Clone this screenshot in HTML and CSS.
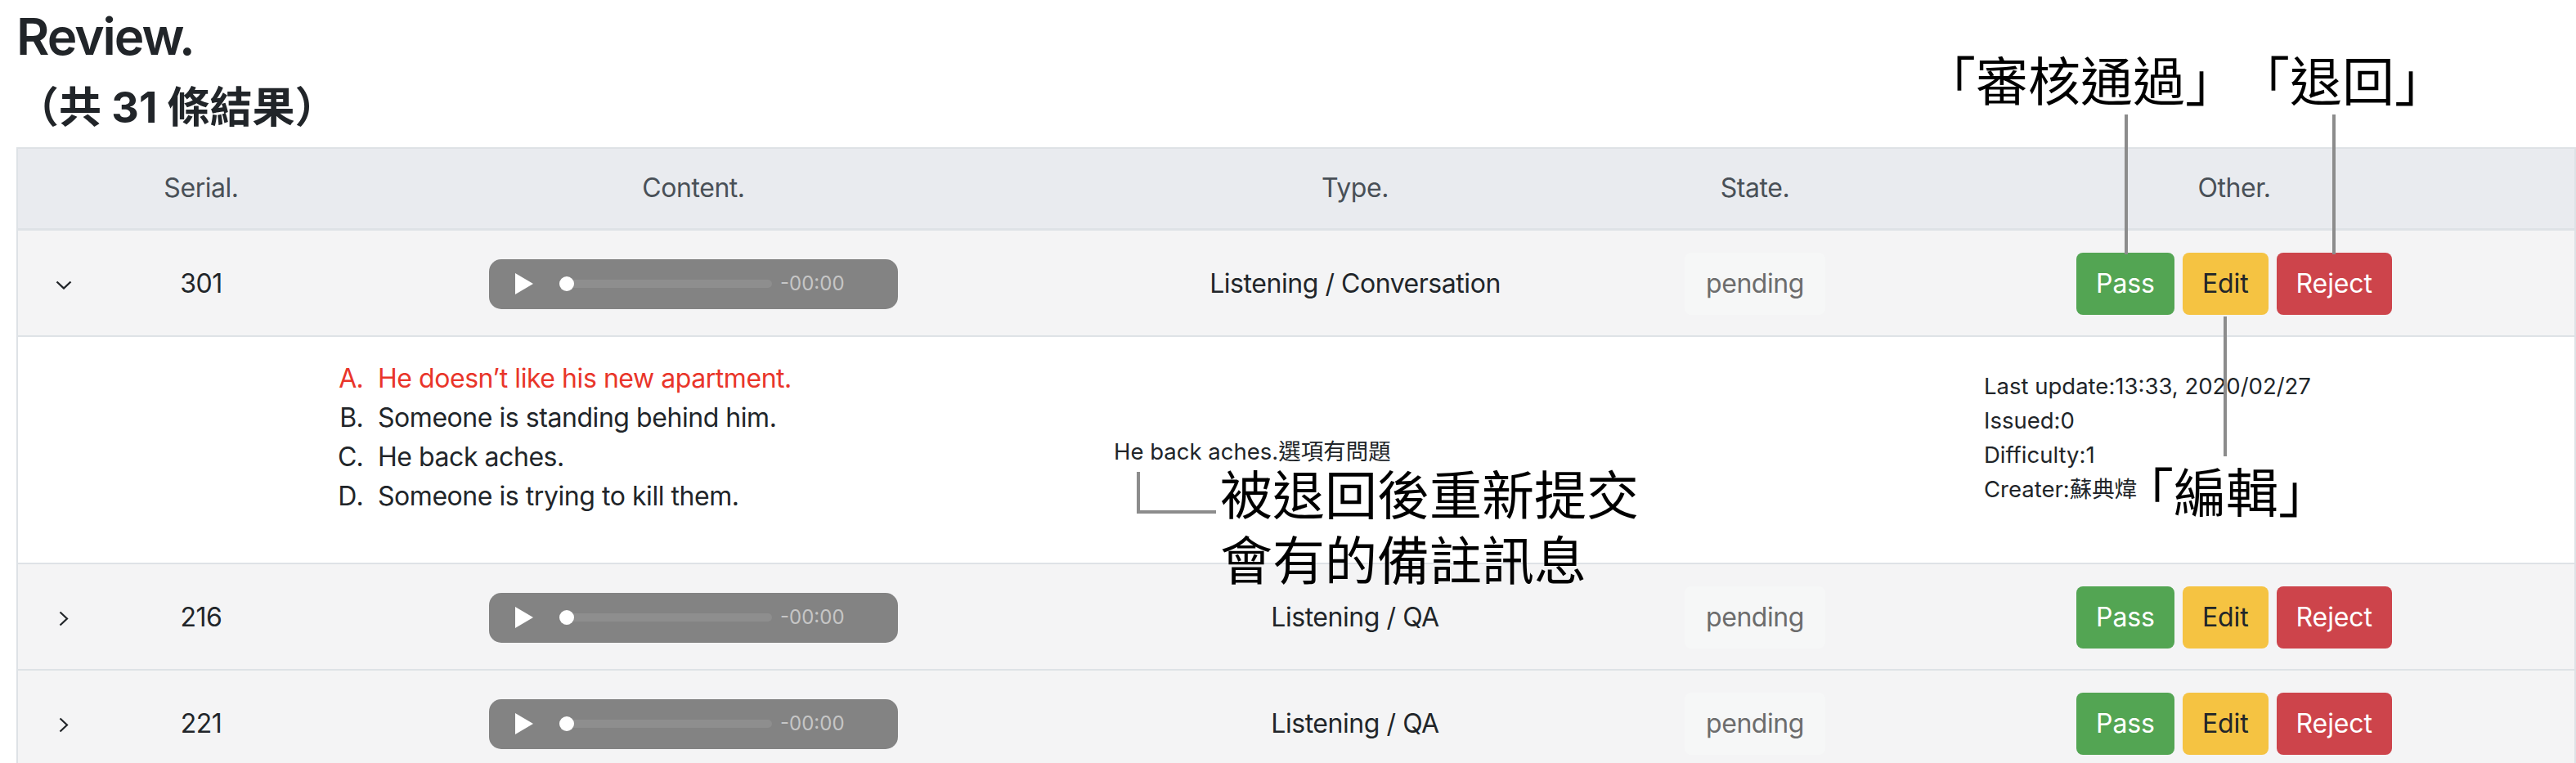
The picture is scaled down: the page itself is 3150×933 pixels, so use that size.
FILE: index.html
```html
<!DOCTYPE html>
<html lang="zh-Hant">
<head>
<meta charset="utf-8">
<title>Review.</title>
<link rel="stylesheet" href="styles.css">
</head>
<body>
<div class="page">
  <header class="page-head">
    <h2 class="title">Review.</h2>
    <h3 class="count">（共 31 條結果）</h3>
  </header>

  <table class="review">
    <colgroup>
      <col class="c-toggle"><col class="c-serial"><col class="c-content"><col class="c-type"><col class="c-state"><col class="c-other">
    </colgroup>
    <thead>
      <tr><th></th><th>Serial.</th><th>Content.</th><th>Type.</th><th>State.</th><th>Other.</th></tr>
    </thead>
    <tbody>
      <tr class="row">
        <td><svg class="chev-down" width="20" height="11" viewBox="0 0 20 11"><polyline points="1.5,1.5 10,9.5 18.5,1.5" fill="none" stroke="#212529" stroke-width="2.4"/></svg></td>
        <td>301</td>
        <td>
          <div class="player">
            <svg class="play" width="22" height="26" viewBox="0 0 22 26"><polygon points="0,0 22,13 0,26" fill="#fff"/></svg>
            <div class="track"><span class="knob"></span></div>
            <span class="time">-00:00</span>
          </div>
        </td>
        <td>Listening / Conversation</td>
        <td><span class="badge">pending</span></td>
        <td><div class="actions"><span class="btn pass">Pass</span><span class="btn edit">Edit</span><span class="btn reject">Reject</span></div></td>
      </tr>
      <tr class="detail">
        <td></td>
        <td></td>
        <td>
          <ol class="options">
            <li class="correct">He doesn’t like his new apartment.</li>
            <li>Someone is standing behind him.</li>
            <li>He back aches.</li>
            <li>Someone is trying to kill them.</li>
          </ol>
        </td>
        <td><span class="note">He back aches.選項有問題</span></td>
        <td></td>
        <td class="info-cell">
          <div class="info">
            <div>Last update:13:33, 2020/02/27</div>
            <div>Issued:0</div>
            <div>Difficulty:1</div>
            <div>Creater:蘇典煒</div>
          </div>
        </td>
      </tr>
      <tr class="row">
        <td><svg class="chev-right" width="12" height="19" viewBox="0 0 12 19"><polyline points="1.5,1.5 10,9.5 1.5,17.5" fill="none" stroke="#212529" stroke-width="2.2"/></svg></td>
        <td>216</td>
        <td>
          <div class="player">
            <svg class="play" width="22" height="26" viewBox="0 0 22 26"><polygon points="0,0 22,13 0,26" fill="#fff"/></svg>
            <div class="track"><span class="knob"></span></div>
            <span class="time">-00:00</span>
          </div>
        </td>
        <td>Listening / QA</td>
        <td><span class="badge">pending</span></td>
        <td><div class="actions"><span class="btn pass">Pass</span><span class="btn edit">Edit</span><span class="btn reject">Reject</span></div></td>
      </tr>
      <tr class="row">
        <td><svg class="chev-right" width="12" height="19" viewBox="0 0 12 19"><polyline points="1.5,1.5 10,9.5 1.5,17.5" fill="none" stroke="#212529" stroke-width="2.2"/></svg></td>
        <td>221</td>
        <td>
          <div class="player">
            <svg class="play" width="22" height="26" viewBox="0 0 22 26"><polygon points="0,0 22,13 0,26" fill="#fff"/></svg>
            <div class="track"><span class="knob"></span></div>
            <span class="time">-00:00</span>
          </div>
        </td>
        <td>Listening / QA</td>
        <td><span class="badge">pending</span></td>
        <td><div class="actions"><span class="btn pass">Pass</span><span class="btn edit">Edit</span><span class="btn reject">Reject</span></div></td>
      </tr>
    </tbody>
  </table>

  <!-- annotation overlays -->
  <div class="ann ann-top">「審核通過」「退回」</div>
  <div class="ann-line line-pass"></div>
  <div class="ann-line line-reject"></div>
  <div class="ann-line line-edit"></div>
  <div class="ann ann-edit">「編輯」</div>
  <div class="ann-elbow"></div>
  <div class="ann ann-note">被退回後重新提交<br>會有的備註訊息</div>
</div>
</body>
</html>
```

FILE: styles.css
```css
* { box-sizing: border-box; }

html, body {
  margin: 0;
  padding: 0;
  background: #fff;
}

body {
  font-family: Inter, "Noto Sans CJK TC", sans-serif;
  color: #212529;
  font-size: 32px;
  line-height: 48px;
}

.page {
  position: relative;
  padding: 0 2px 0 20px;
  overflow: hidden;
  height: 933px;
}

.page-head {
  height: 180px;
}

.title {
  margin: 0;
  padding-top: 7px;
  font-size: 62px;
  line-height: 76px;
  font-weight: 600;
  letter-spacing: -2px;
}

.count {
  margin: 0;
  padding-top: 17px;
  font-size: 52px;
  line-height: 64px;
  font-weight: 700;
}

/* table */
.review {
  width: 3128px;
  table-layout: fixed;
  border-collapse: separate;
  border-spacing: 0;
  border: 2px solid #dee2e6;
  border-bottom: 0;
  letter-spacing: -0.45px;
}

.c-toggle { width: 112px; }
.c-serial { width: 224px; }
.c-content { width: 980px; }
.c-type { width: 638px; }
.c-state { width: 340px; }
.c-other { width: 832px; }

.review th {
  background: #e9ebef;
  color: #495057;
  font-weight: 400;
  font-size: 32px;
  line-height: 51px;
  padding: 22px 24px 24px;
  text-align: center;
  border-bottom: 3px solid #dee2e6;
}

.review td {
  padding: 27px 24px 25px;
  border-top: 2px solid #dee2e6;
  vertical-align: middle;
  text-align: center;
  line-height: 48px;
}

.review tbody tr:first-child td { border-top: 0; }

.row td { background: #f4f4f5; }
.detail td { background: #fff; text-align: left; }

.chev-down, .chev-right { display: block; margin: 2px auto 0; }

/* audio player */
.player {
  width: 500px;
  height: 61px;
  margin: 0 auto;
  background: #838383;
  border-radius: 15px;
  display: flex;
  align-items: center;
  padding-left: 32px;
  letter-spacing: 0;
}

.play { flex: none; display: block; }

.track {
  position: relative;
  margin-left: 32px;
  width: 260px;
  height: 10px;
  border-radius: 5px;
  background: #8e8e8e;
}

.knob {
  position: absolute;
  left: 0;
  top: -4px;
  width: 18px;
  height: 18px;
  border-radius: 50%;
  background: #fff;
}

.time {
  margin-left: 10px;
  font-size: 24px;
  line-height: 30px;
  color: #c6c6c6;
}

/* state badge */
.badge {
  display: inline-block;
  height: 76px;
  line-height: 76px;
  padding: 0 26px;
  border-radius: 8px;
  background: #f6f7f7;
  color: #6c6c6c;
}

/* action buttons */
.actions {
  display: flex;
  justify-content: center;
  gap: 10px;
  letter-spacing: -0.1px;
}

.btn {
  display: inline-block;
  height: 76px;
  line-height: 76px;
  padding: 0 24px;
  border-radius: 8px;
  font-size: 32px;
}

.pass { background: #53a553; color: #fff; }
.edit { background: #f5c342; color: #212529; }
.reject { background: #cd444b; color: #fff; }

/* detail row */
.options {
  margin: 0 0 32px;
  padding-left: 80px;
  list-style: upper-alpha;
  font-size: 32px;
  line-height: 48px;
}

.options li::marker {
  content: counter(list-item, upper-alpha) ".\2002\200A";
}

.options .correct { color: #e9352a; }

.note {
  font-size: 27.5px;
  line-height: 42px;
  letter-spacing: 0;
}

.detail td.info-cell { padding-left: 110px; }

.info {
  margin-bottom: 32px;
  font-size: 27.5px;
  line-height: 42px;
  letter-spacing: 0;
}

/* annotations (overlay) */
.ann {
  position: absolute;
  font-family: "Noto Sans CJK TC", sans-serif;
  font-weight: 400;
  font-size: 64px;
  line-height: 64px;
  color: #000;
  white-space: nowrap;
  text-spacing-trim: space-all;
}

.ann-top { left: 2352px; top: 63px; }
.ann-edit { left: 2594px; top: 566px; }
.ann-note { left: 1492px; top: 561px; line-height: 80px; }

.ann-line {
  position: absolute;
  width: 4px;
  background: #8c8c8c;
}

.line-pass { left: 2598px; top: 140px; height: 171px; }
.line-reject { left: 2852px; top: 140px; height: 171px; }
.line-edit { left: 2719px; top: 387px; height: 171px; }

.ann-elbow {
  position: absolute;
  left: 1390px;
  top: 577px;
  width: 97px;
  height: 51px;
  border-left: 4px solid #8c8c8c;
  border-bottom: 4px solid #8c8c8c;
}
```
